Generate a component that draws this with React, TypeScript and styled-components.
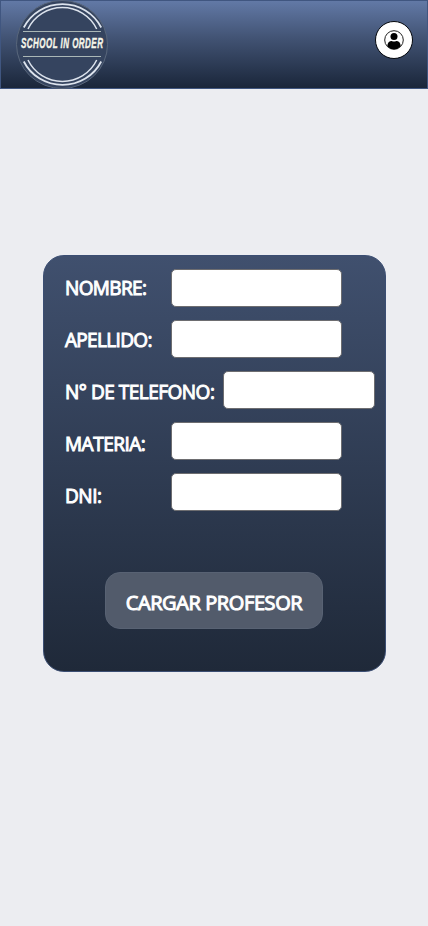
import React from "react";
import styled, { createGlobalStyle } from "styled-components";

const GlobalStyle = createGlobalStyle`
  * { box-sizing: border-box; }
  body { margin: 0; background: #ecedf1; }
`;

const Page = styled.div`
  min-height: 926px;
  background: #ecedf1;
  font-family: "Open Sans", "Noto Sans", sans-serif;
`;

const Header = styled.header`
  display: flex;
  justify-content: space-between;
  height: 89px;
  padding: 0 14px;
  border: 1px solid #405680;
  background: linear-gradient(180deg, #6279a6 0%, #405171 45%, #1a263a 100%);
`;

const Logo = styled.svg`
  display: block;
  width: 94px;
  height: 89px;
  margin-top: -1px;
  overflow: visible;
`;

const ProfileButton = styled.button`
  display: flex;
  align-items: center;
  justify-content: center;
  width: 38px;
  height: 38px;
  margin-top: 20px;
  padding: 0;
  border: 1px solid #05080d;
  border-radius: 50%;
  background: #fff;
`;

const Card = styled.form`
  width: 343px;
  height: 417px;
  margin: 166px 0 0 43px;
  padding: 13px 0 0 21px;
  border: 1px solid #3b4e73;
  border-radius: 21px;
  background: linear-gradient(180deg, #40506e 0%, #1f2939 100%);
`;

const Fields = styled.div`
  display: grid;
  grid-template-columns: 106px 1fr;
  height: 246px;
`;

const Labels = styled.div`
  display: flex;
  flex-direction: column;
`;

const Label = styled.label<{ $spacing: number }>`
  height: 52px;
  line-height: 37px;
  color: #fff;
  font-size: 20px;
  font-weight: 400;
  letter-spacing: ${({ $spacing }) => $spacing}px;
  white-space: nowrap;
  transform: scaleX(0.95);
  transform-origin: left;
  -webkit-text-stroke: 1px #fff;
`;

const Inputs = styled.div`
  display: flex;
  flex-direction: column;
  gap: 13px;
`;

const Input = styled.input<{ $shifted?: boolean }>`
  width: ${({ $shifted }) => ($shifted ? 152 : 171)}px;
  height: 38px;
  margin-left: ${({ $shifted }) => ($shifted ? 52 : 0)}px;
  padding: 0 8px;
  border: 1px solid #6d6d70;
  border-radius: 5px;
  background: #fff;
`;

const SubmitButton = styled.button`
  display: flex;
  align-items: center;
  justify-content: center;
  width: 218px;
  height: 57px;
  margin: 57px 0 0 40px;
  padding: 3px 0 0;
  border: 1px solid #586273;
  border-radius: 15px;
  background: #525b6b;
  color: #fff;
  font: 400 20px "Open Sans", "Noto Sans", sans-serif;
  letter-spacing: -0.4px;
  white-space: nowrap;
  -webkit-text-stroke: 1px #fff;
`;

const fields = [
  { id: "nombre", label: "NOMBRE:", spacing: -0.65 },
  { id: "apellido", label: "APELLIDO:", spacing: -0.7 },
  { id: "telefono", label: "N° DE TELEFONO:", spacing: -0.52, shifted: true },
  { id: "materia", label: "MATERIA:", spacing: -0.5 },
  { id: "dni", label: "DNI:", spacing: -0.5 },
];

function SchoolLogo() {
  return (
    <Logo viewBox="0 0 94 89">
      <ellipse cx="47" cy="44.5" rx="45.5" ry="44" fill="#35445f" stroke="#59677c" />
      <g fill="none" stroke="#dce3ed">
        <path strokeWidth="1.8" d="M8.800 27.500A43 41.500 0 0 1 86.200 27.500M8.800 61.500A43 41.500 0 0 0 86.200 61.500" />
        <path strokeWidth="1.5" d="M13 29A38 37.500 0 0 1 81.700 29M13 60A38 37.500 0 0 0 81.700 60" />
        <path stroke="#aab7b6" strokeWidth="1" d="M8 31.500H86M8 56.500H86" />
      </g>
      <text
        transform="translate(6 48.200) scale(.55 1)"
        textLength="149"
        lengthAdjust="spacing"
        fill="#f5f5e9"
        stroke="#f5f5e9"
        strokeWidth=".4"
        fontFamily="'Liberation Sans', sans-serif"
        fontSize="14.600"
        fontWeight="700"
        fontStyle="italic"
      >
        SCHOOL IN ORDER
      </text>
    </Logo>
  );
}

function ProfileIcon() {
  return (
    <svg width="20" height="20" viewBox="0 0 20 20">
      <circle cx="10" cy="10" r="9.300" fill="#fff" stroke="#222" strokeWidth="1" />
      <circle cx="10" cy="6.500" r="3.500" />
      <path d="M3.300 16.200C3.300 12.800 5.300 10.900 7.800 10.900Q10 12 12.200 10.900C14.700 10.900 16.700 12.800 16.700 16.200Q14 19.300 10 19.300T3.300 16.200Z" />
    </svg>
  );
}

export default function App() {
  return (
    <Page>
      <GlobalStyle />
      <Header>
        <SchoolLogo />
        <ProfileButton type="button" aria-label="Perfil">
          <ProfileIcon />
        </ProfileButton>
      </Header>
      <Card>
        <Fields>
          <Labels>
            {fields.map((f) => (
              <Label key={f.id} htmlFor={f.id} $spacing={f.spacing}>
                {f.label}
              </Label>
            ))}
          </Labels>
          <Inputs>
            {fields.map((f) => (
              <Input key={f.id} id={f.id} $shifted={f.shifted} />
            ))}
          </Inputs>
        </Fields>
        <SubmitButton type="button">CARGAR PROFESOR</SubmitButton>
      </Card>
    </Page>
  );
}
